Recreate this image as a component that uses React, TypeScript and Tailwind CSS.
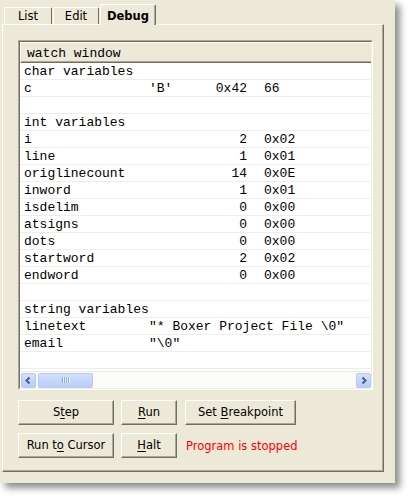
import React from "react";

type Row = { n: string; v?: string; num?: string; hex?: string };

const rows: Row[] = [
  { n: "char variables" },
  { n: "c", v: "'B'", num: "0x42", hex: "66" },
  { n: "" },
  { n: "int variables" },
  { n: "i", num: "2", hex: "0x02" },
  { n: "line", num: "1", hex: "0x01" },
  { n: "origlinecount", num: "14", hex: "0x0E" },
  { n: "inword", num: "1", hex: "0x01" },
  { n: "isdelim", num: "0", hex: "0x00" },
  { n: "atsigns", num: "0", hex: "0x00" },
  { n: "dots", num: "0", hex: "0x00" },
  { n: "startword", num: "2", hex: "0x02" },
  { n: "endword", num: "0", hex: "0x00" },
  { n: "" },
  { n: "string variables" },
  { n: "linetext", v: '"* Boxer Project File \\0"' },
  { n: "email", v: '"\\0"' },
  { n: "" },
  { n: "" },
];

function WatchRow({ r }: { r: Row }) {
  const isStr = r.v !== undefined && r.num === undefined;
  return (
    <div className="flex h-[17px] shrink-0 items-center border-b border-[#efede4] pl-[4px] pt-px whitespace-nowrap leading-none">
      <div className="w-[125px] shrink-0">{r.n}</div>
      {isStr ? (
        <div>{r.v}</div>
      ) : (
        <>
          <div className="w-[98px] shrink-0 flex justify-between">
            <span>{r.v ?? ""}</span>
            <span>{r.num ?? ""}</span>
          </div>
          <div className="w-[17px] shrink-0" />
          <div>{r.hex ?? ""}</div>
        </>
      )}
    </div>
  );
}

function Btn({ w, children }: { w: string; children: React.ReactNode }) {
  return (
    <div
      className={`${w} h-[25px] shrink-0 flex items-center justify-center bg-[#ece9d8] border-t border-l border-white border-r border-b border-r-[#716f64] border-b-[#716f64] shadow-[inset_-1px_-1px_0_#aca899] leading-none`}
    >
      {children}
    </div>
  );
}

function U({ children }: { children: React.ReactNode }) {
  return <span className="underline underline-offset-[2px]">{children}</span>;
}

function ArrowBtn({ dir }: { dir: "l" | "r" }) {
  return (
    <div className="w-[15px] h-[15px] shrink-0 rounded-[2px] border border-[#b7c9f3] bg-gradient-to-b from-[#d3e0fd] to-[#b8cdf9] flex items-center justify-center">
      <svg width="9" height="9" viewBox="0 0 9 9">
        {dir === "l" ? (
          <path d="M5.5 1.5 L2.5 4.5 L5.5 7.5" fill="none" stroke="#4d6185" strokeWidth="2" />
        ) : (
          <path d="M3.5 1.5 L6.5 4.5 L3.5 7.5" fill="none" stroke="#4d6185" strokeWidth="2" />
        )}
      </svg>
    </div>
  );
}

export default function App() {
  return (
    <div className="w-[411px] h-[500px] bg-white overflow-hidden">
      <div className="w-[395px] h-[483px] bg-[#ece9d8] shadow-[5px_5px_7px_rgba(0,0,0,0.45)] pt-[2px] pl-[2px] font-['DejaVu_Sans',sans-serif] text-[11.5px] text-black">
        {/* tabs */}
        <div className="flex items-end h-[22px] pl-[2px]">
          <div className="w-[48px] h-[17px] flex items-center justify-center border-t border-l border-white border-r border-r-[#716f64] rounded-t-[2px] pt-[2px]">
            List
          </div>
          <div className="ml-[1px] w-[46px] h-[17px] flex items-center justify-center border-t border-l border-white border-r border-r-[#716f64] rounded-t-[2px] pt-[2px]">
            Edit
          </div>
          <div className="relative z-10 -mb-px ml-[1px] w-[56px] h-[21px] flex items-start justify-center bg-[#ece9d8] border-t border-l border-white border-r border-r-[#716f64] shadow-[inset_-1px_0_0_#aca899] rounded-t-[2px] pt-[3px] font-bold">
            Debug
          </div>
        </div>
        {/* panel */}
        <div className="w-[382px] h-[448px] border-t border-l border-white border-r border-b border-r-[#716f64] border-b-[#716f64] shadow-[inset_-1px_-1px_0_#aca899] pt-[15px] pl-[15px]">
          {/* watch box */}
          <div className="w-[355px] h-[350px] border-t border-l border-[#aca899] border-r border-b border-r-white border-b-white">
            <div className="h-full flex flex-col border-t border-l border-[#716f64] border-r border-b border-r-[#f1efe2] border-b-[#f1efe2] font-['Liberation_Mono',monospace] text-[13px]">
              <div className="h-[21px] shrink-0 flex items-center bg-[#ece9d8] border-t border-l border-white border-b border-b-[#716f64] shadow-[inset_0_-1px_0_#aca899] pl-[6px] pt-px leading-none">
                watch window
              </div>
              <div className="flex-1 overflow-hidden bg-white flex flex-col">
                {rows.map((r, i) => (
                  <WatchRow key={i} r={r} />
                ))}
              </div>
              <div className="h-[17px] shrink-0 flex items-center bg-[#fbfbf8] border-t border-[#efede4] pl-px pr-0">
                <ArrowBtn dir="l" />
                <div className="ml-[2px] w-[55px] h-[15px] rounded-[2px] border border-[#b7c9f3] bg-gradient-to-b from-[#d3e0fd] to-[#b8cdf9] flex items-center justify-center gap-px">
                  {[0, 1, 2, 3].map((k) => (
                    <div key={k} className="w-px h-[6px] bg-[#8ca9e8] shadow-[1px_0_0_#eef3fe]" />
                  ))}
                </div>
                <div className="flex-1" />
                <ArrowBtn dir="r" />
              </div>
            </div>
          </div>
          {/* buttons */}
          <div className="mt-[10px] flex items-center">
            <Btn w="w-[96px]">
              <span>
                S<U>t</U>ep
              </span>
            </Btn>
            <div className="ml-[7px]">
              <Btn w="w-[56px]">
                <span>
                  <U>R</U>un
                </span>
              </Btn>
            </div>
            <div className="ml-[8px]">
              <Btn w="w-[111px]">
                <span>
                  Set <U>B</U>reakpoint
                </span>
              </Btn>
            </div>
          </div>
          <div className="mt-[8px] flex items-center">
            <Btn w="w-[96px]">
              <span>
                Run t<U>o</U> Cursor
              </span>
            </Btn>
            <div className="ml-[7px]">
              <Btn w="w-[56px]">
                <span>
                  <U>H</U>alt
                </span>
              </Btn>
            </div>
            <div className="ml-[9px] text-[#ff0000] pt-[2px]">Program is stopped</div>
          </div>
        </div>
      </div>
    </div>
  );
}
